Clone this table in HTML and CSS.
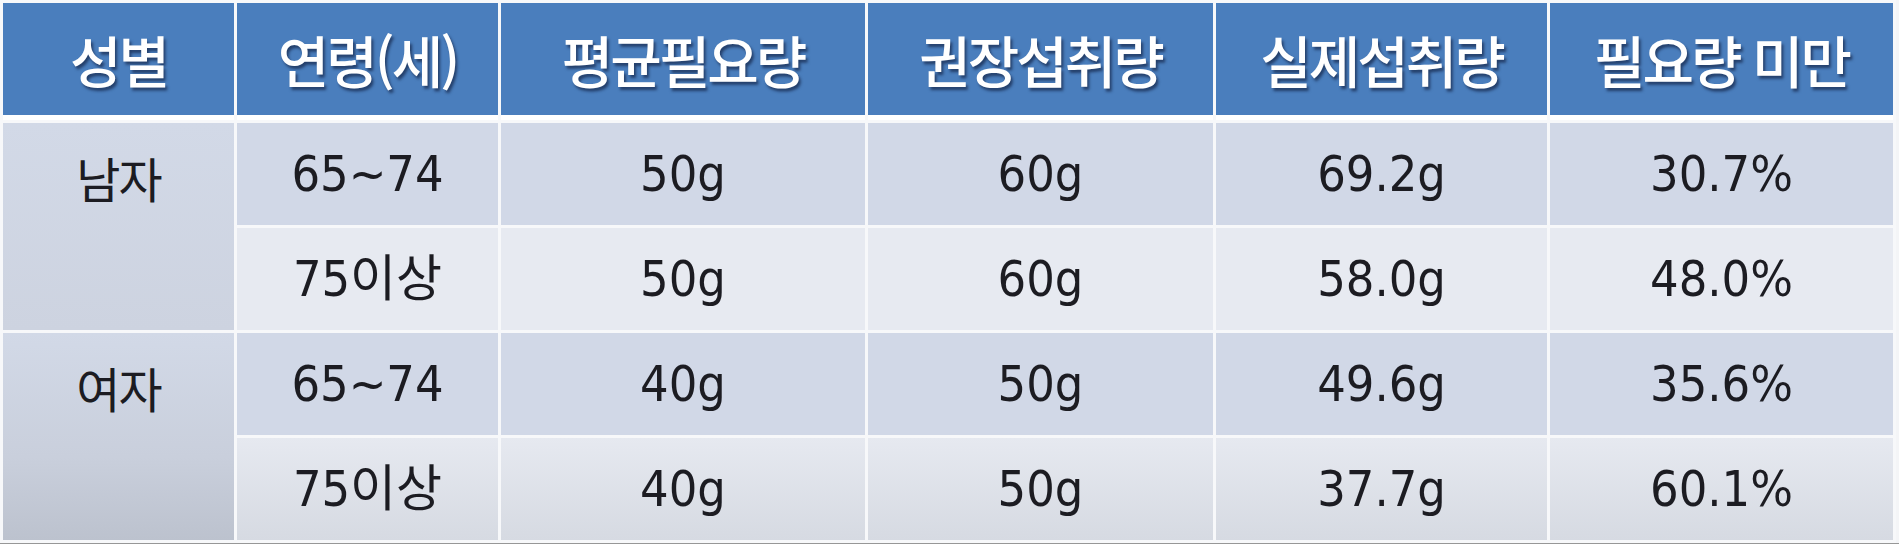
FILE: index.html
```html
<!DOCTYPE html>
<html lang="ko">
<head>
<meta charset="utf-8">
<title>노인 단백질 섭취량</title>
<link rel="stylesheet" href="styles.css">
</head>
<body>
<table class="intake">
  <thead>
    <tr>
      <th class="c1">성별</th>
      <th class="c2">연령(세)</th>
      <th class="c3">평균필요량</th>
      <th class="c4">권장섭취량</th>
      <th class="c5">실제섭취량</th>
      <th class="c6">필요량 미만</th>
    </tr>
  </thead>
  <tbody>
    <tr class="odd">
      <td class="sex" rowspan="2">남자</td>
      <td>65~74</td>
      <td>50g</td>
      <td>60g</td>
      <td>69.2g</td>
      <td>30.7%</td>
    </tr>
    <tr class="even">
      <td>75이상</td>
      <td>50g</td>
      <td>60g</td>
      <td>58.0g</td>
      <td>48.0%</td>
    </tr>
    <tr class="odd">
      <td class="sex last" rowspan="2">여자</td>
      <td>65~74</td>
      <td>40g</td>
      <td>50g</td>
      <td>49.6g</td>
      <td>35.6%</td>
    </tr>
    <tr class="even bottom">
      <td>75이상</td>
      <td>40g</td>
      <td>50g</td>
      <td>37.7g</td>
      <td>60.1%</td>
    </tr>
  </tbody>
</table>
<div class="floor"></div>
</body>
</html>
```

FILE: styles.css
```css
html, body {
  margin: 0;
  padding: 0;
  background: #f4f5f7;
  overflow: hidden;
}

.intake {
  border-collapse: separate;
  border-spacing: 3px;
  table-layout: fixed;
  width: 1896px;
  background: #f7f8fa;
}

.intake th {
  height: 112px;
  padding: 0;
  background: #4a7ebd;
  color: #ffffff;
  font-family: "Noto Sans CJK KR", "Noto Sans", sans-serif;
  font-weight: 500;
  font-size: 56px;
  letter-spacing: -3px;
  line-height: 1;
  text-align: center;
  vertical-align: middle;
  text-shadow: 2px 3px 3px rgba(10, 20, 50, 0.6);
  border-bottom: 5px solid #ffffff;
}

.c1 { width: 231px; }
.c2 { width: 261px; }
.c3 { width: 364px; }
.c4 { width: 345px; }
.c5 { width: 331px; }
.c6 { width: 343px; }

.intake td {
  height: 102px;
  padding: 0;
  color: #1c1c22;
  font-family: "DejaVu Sans", "Noto Sans CJK KR", sans-serif;
  font-stretch: condensed;
  font-size: 50px;
  line-height: 1;
  text-align: center;
  vertical-align: middle;
}

.odd td { background: #d1d8e7; }
.even td { background: #e7eaf1; }
.bottom td { background: linear-gradient(#e6e9f0, #d6dae2); }

.intake td.sex {
  vertical-align: top;
  padding-top: 30px;
  font-family: "Noto Sans CJK KR", sans-serif;
  font-size: 48px;
  letter-spacing: -2px;
  background: linear-gradient(#d2d9e7, #cdd3e0);
}

.intake td.sex.last {
  background: linear-gradient(#d2d9e7 0%, #c9cfdc 60%, #bcc2ce 100%);
}

.floor {
  height: 12px;
  background: linear-gradient(#9a9a9a, #555555);
}
```
